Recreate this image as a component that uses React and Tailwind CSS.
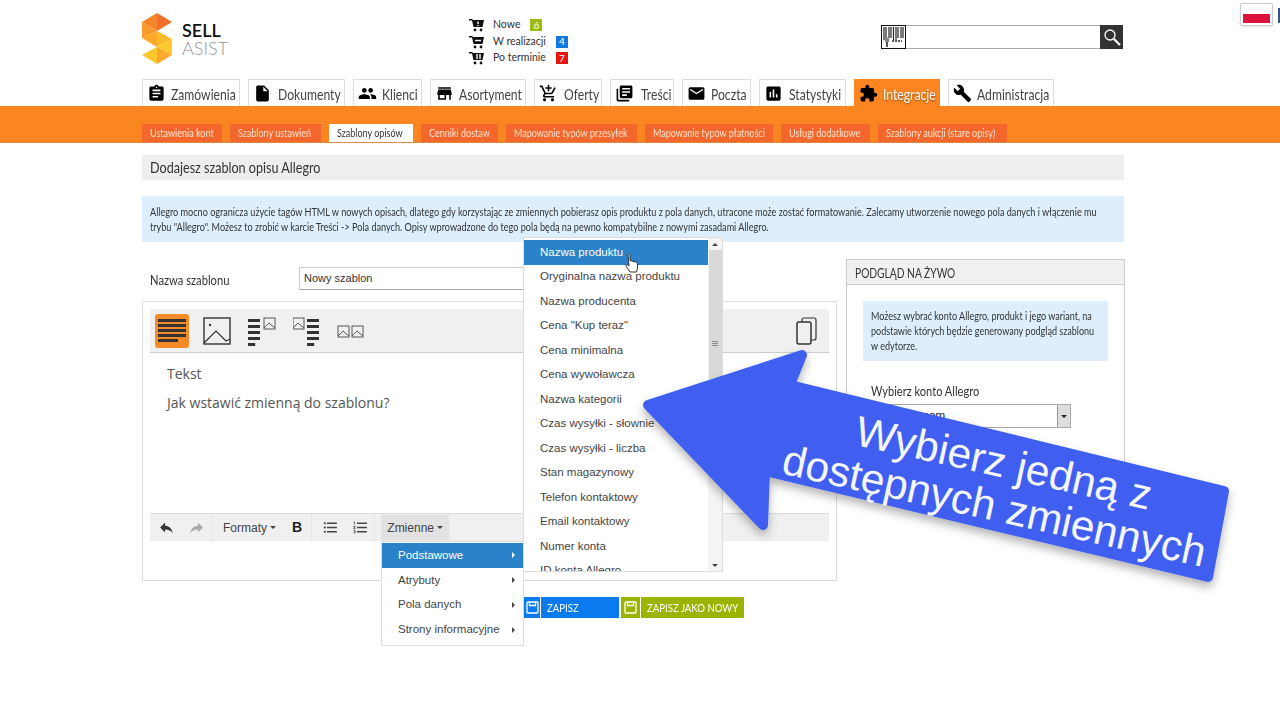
import {
  MdAssignment,
  MdInsertDriveFile,
  MdPeople,
  MdStore,
  MdAddShoppingCart,
  MdLibraryBooks,
  MdEmail,
  MdAssessment,
  MdExtension,
  MdBuild,
  MdReply,
  MdFormatListBulleted,
  MdFormatListNumbered,
} from 'react-icons/md'

const tabs = [
  { label: 'Zamówienia', icon: MdAssignment, w: 'w-[98px]', gap: 'gap-[5px]' },
  { label: 'Dokumenty', icon: MdInsertDriveFile, w: 'w-[97px]', gap: 'gap-[6px]' },
  { label: 'Klienci', icon: MdPeople, w: 'w-[69px]', gap: 'gap-[5px]' },
  { label: 'Asortyment', icon: MdStore, w: 'w-[96px]', gap: 'gap-[5px]' },
  { label: 'Oferty', icon: MdAddShoppingCart, w: 'w-[68px]', gap: 'gap-[6px]' },
  { label: 'Treści', icon: MdLibraryBooks, w: 'w-[64px]', gap: 'gap-[7px]' },
  { label: 'Poczta', icon: MdEmail, w: 'w-[69px]', gap: 'gap-[5px]' },
  { label: 'Statystyki', icon: MdAssessment, w: 'w-[87px]', gap: 'gap-[6px]' },
  { label: 'Integracje', icon: MdExtension, w: 'w-[86px]', gap: 'gap-[5px]', active: true },
  { label: 'Administracja', icon: MdBuild, w: 'w-[106px]', gap: 'gap-[5px]' },
]

const subTabs = [
  { label: 'Ustawienia kont', w: 'w-[80px]' },
  { label: 'Szablony ustawień', w: 'w-[91px]' },
  { label: 'Szablony opisów', w: 'w-[84px]', active: true },
  { label: 'Cenniki dostaw', w: 'w-[77px]' },
  { label: 'Mapowanie typów przesyłek', w: 'w-[131px]' },
  { label: 'Mapowanie typów płatności', w: 'w-[128px]' },
  { label: 'Usługi dodatkowe', w: 'w-[89px]' },
  { label: 'Szablony aukcji (stare opisy)', w: 'w-[129px]' },
]

const variables = [
  'Nazwa produktu',
  'Oryginalna nazwa produktu',
  'Nazwa producenta',
  'Cena "Kup teraz"',
  'Cena minimalna',
  'Cena wywoławcza',
  'Nazwa kategorii',
  'Czas wysyłki - słownie',
  'Czas wysyłki - liczba',
  'Stan magazynowy',
  'Telefon kontaktowy',
  'Email kontaktowy',
  'Numer konta',
  'ID konta Allegro',
]

const groups = ['Podstawowe', 'Atrybuty', 'Pola danych', 'Strony informacyjne']

// the page's narrow webfont isn't installed, so Lato gets squeezed sideways
function Narrow({ className = '', children }) {
  return <span className={`inline-block origin-left whitespace-nowrap ${className}`}>{children}</span>
}

function Logo() {
  return (
    <svg width="31" height="52" viewBox="0 0 31 52">
      <polygon points="15,0 30,9 15,18" fill="#f26f2b" />
      <polygon points="15,0 0,9 15,18" fill="#f6852a" />
      <polygon points="0,9 15,18 0,25" fill="#f89a2b" />
      <polygon points="15,18 0,25 15,34" fill="#faa92b" />
      <polygon points="15,18 30,26 15,34" fill="#fbb92c" />
      <polygon points="30,26 15,34 30,42" fill="#fdcb30" />
      <polygon points="15,34 0,42 15,51" fill="#fdc52e" />
      <polygon points="15,34 30,42 15,51" fill="#f9a92b" />
    </svg>
  )
}

function CartIcon({ mark }) {
  return (
    <svg width="16" height="14" viewBox="0 0 16 14">
      <path d="M0 1h3l1 1h11l-1.500 7H4.500L3 2.500H0z" fill="#111" />
      <circle cx="6" cy="12" r="1.400" fill="#111" />
      <circle cx="12" cy="12" r="1.400" fill="#111" />
      <path d={mark} stroke="#fff" strokeWidth="1.400" fill="none" />
    </svg>
  )
}

function LayoutIcon({ kind }) {
  const lines = (x, w) => (
    <g fill="#333">
      <rect x={x} y="4" width={w} height="3" />
      <rect x={x} y="10" width={w} height="3" />
      <rect x={x} y="16" width={w} height="3" />
      <rect x={x} y="22" width={w} height="3" />
      <rect x={x} y="28" width={w * 0.6} height="3" />
    </g>
  )
  const pic = (x, y, s) => (
    <g fill="none" stroke="#555" strokeWidth="1">
      <rect x={x} y={y} width={s} height={s} />
      <path d={`M${x} ${y + s - 1}l${s * 0.45} ${-s * 0.45}l${s * 0.55} ${s * 0.45}`} />
    </g>
  )
  if (kind === 'left') return <svg width="30" height="32" viewBox="0 0 30 32">{lines(0, 12)}{pic(16, 3, 11)}</svg>
  if (kind === 'right') return <svg width="30" height="32" viewBox="0 0 30 32">{pic(0, 3, 11)}{lines(14, 12)}</svg>
  return <svg width="28" height="32" viewBox="0 0 28 32">{pic(1, 11, 11)}{pic(15, 11, 11)}</svg>
}

function SaveIcon() {
  return (
    <svg width="13" height="13" viewBox="0 0 13 13" fill="none" stroke="#fff" strokeWidth="1.300">
      <rect x="1" y="1" width="11" height="11" rx="1" />
      <path d="M3.500 1v3.500h6V1" />
    </svg>
  )
}

function App() {
  return (
    <div className="relative w-[1280px] h-[720px] overflow-hidden bg-white font-['Lato',sans-serif] text-[#333]">
      {/* Header */}
      <header className="h-[79px] pl-[142px] pr-[156px] flex items-start">
        <div className="w-[327px] pt-[13px] flex items-start gap-[9px]">
          <Logo />
          <div className="pt-[8px] text-[18px] leading-[18px]">
            <div className="font-semibold text-[#111]">SELL</div>
            <div className="font-light text-[#999]">ASIST</div>
          </div>
        </div>
        <div className="w-[412px] pt-[17px] text-[10.5px]">
          {[
            { label: 'Nowe', n: 6, bg: 'bg-[#9cbb12]', mark: 'M9 3.500v2.500M9 7v1' },
            { label: 'W realizacji', n: 4, bg: 'bg-[#1178e0]', mark: 'M6 5.500h6' },
            { label: 'Po terminie', n: 7, bg: 'bg-[#e2170f]', mark: 'M8 3v5M11 3v5' },
          ].map(r => (
            <div key={r.label} className="h-[16.5px] flex items-center">
              <div className="w-[24px]"><CartIcon mark={r.mark} /></div>
              <span>{r.label}</span>
              <span className={`ml-[10px] w-[12px] h-[12px] flex items-center justify-center text-[10px] text-white ${r.bg}`}>{r.n}</span>
            </div>
          ))}
        </div>
        <div className="pt-[25px] flex">
          <svg width="25" height="24" viewBox="0 0 25 24">
            <rect x="0.500" y="0.500" width="24" height="23" fill="#fff" stroke="#111" />
            <path d="M3 2v13M5 2v13M8 2v11M10 2v11M12.500 2v13M15 2v13M17 2v11M20 2v11M22 2v11" stroke="#222" strokeWidth="1.200" />
            <circle cx="6" cy="15" r="2.500" fill="#888" />
            <path d="M6 17v5" stroke="#222" strokeWidth="1.500" />
            <path d="M11 16h10" stroke="#555" strokeWidth="2" strokeDasharray="2 1" />
          </svg>
          <div className="w-[194px] h-[24px] border-y border-[#aaa] bg-white" />
          <div className="w-[23px] h-[24px] bg-[#333] flex items-center justify-center">
            <svg width="20" height="20" viewBox="0 0 20 20" fill="none" stroke="#fff">
              <circle cx="8" cy="8" r="5" strokeWidth="1.300" />
              <path d="M12 12l6 6" strokeWidth="2.200" />
            </svg>
          </div>
        </div>
      </header>

      {/* Main tabs */}
      <nav className="h-[27px] pl-[142px] flex gap-2 text-[15px]">
        {tabs.map(({ label, icon: Icon, w, gap, active }) => (
          <div
            key={label}
            className={`${w} ${gap} pl-[4px] flex items-center overflow-hidden border border-b-0 ${active ? 'bg-[#fb8520] border-[#fb8520] text-white' : 'bg-white border-[#ddd] text-[#444]'}`}
          >
            <Icon size={19} className="shrink-0 text-black" />
            <Narrow className={`scale-x-[0.81] mt-[2px] ${active ? '[text-shadow:0_1px_2px_rgba(0,0,0,0.45)]' : ''}`}>{label}</Narrow>
          </div>
        ))}
      </nav>

      {/* Sub tabs */}
      <div className="h-[37px] bg-[#fb8520] pt-[18px] pl-[142px] flex gap-2 text-[11px] border-b border-[#d98a40]">
        {subTabs.map(t => (
          <div
            key={t.label}
            className={`${t.w} pl-2 flex items-center overflow-hidden ${t.active ? 'bg-white text-[#333]' : 'bg-[#f4672c] text-[#ffe3d0]'}`}
          >
            <Narrow className="scale-x-[0.82]">{t.label}</Narrow>
          </div>
        ))}
      </div>

      <main className="pl-[142px] pt-[12px] w-[1125px]">
        <div className="h-[25px] w-[982px] bg-[#eee] px-2 flex items-center text-[15px]">
          <Narrow className="scale-x-[0.84]">Dodajesz szablon opisu Allegro</Narrow>
        </div>
        <div className="mt-[16px] h-[46px] w-[982px] bg-[#ddeefc] px-2 pt-[8px] text-[11px] leading-[15px]">
          <Narrow className="scale-x-[0.827]">
            Allegro mocno ogranicza użycie tagów HTML w nowych opisach, dlatego gdy korzystając ze zmiennych pobierasz opis produktu z pola danych, utracone może zostać formatowanie. Zalecamy utworzenie nowego pola danych i włączenie mu
            <br />
            trybu "Allegro". Możesz to zrobić w karcie Treści -&gt; Pola danych. Opisy wprowadzone do tego pola będą na pewno kompatybilne z nowymi zasadami Allegro.
          </Narrow>
        </div>

        <div className="mt-[17px] flex gap-[9px]">
          {/* Editor column */}
          <div className="w-[695px]">
            <div className="pt-[8px] h-[42px] flex items-start">
              <label className="w-[157px] pl-2 pt-[2px] text-[14px]">
                <Narrow className="scale-x-[0.8]">Nazwa szablonu</Narrow>
              </label>
              <div className="w-[300px] h-[23px] border border-[#ccc] border-b-[#aaa] px-1 flex items-center font-['Liberation_Sans',sans-serif] text-[11px]">
                Nowy szablon
              </div>
            </div>
            <div className="h-[280px] border border-[#ddd] px-[7px] pt-[7px]">
              <div className="h-[44px] bg-[#f0f0f0] border-b border-[#ccc] flex items-center pl-[5px] relative">
                <div className="w-[34px] h-[34px] bg-[#f68a26] rounded-[3px] flex flex-col items-center justify-center gap-[2px]">
                  {[28, 28, 28, 28, 20].map((w, i) => (
                    <span key={i} className={`h-[3px] bg-[#333] self-start ml-[3px] ${w === 28 ? 'w-[28px]' : 'w-[20px]'}`} />
                  ))}
                </div>
                <svg width="28" height="28" viewBox="0 0 28 28" className="ml-[14px]">
                  <rect x="1" y="1" width="26" height="26" fill="none" stroke="#333" strokeWidth="1.400" />
                  <circle cx="7" cy="8" r="1.200" fill="#333" />
                  <path d="M1 26l12-12 10 10 4-2" fill="none" stroke="#333" strokeWidth="1.200" />
                </svg>
                <div className="ml-[17px]"><LayoutIcon kind="left" /></div>
                <div className="ml-[15px]"><LayoutIcon kind="right" /></div>
                <div className="ml-[14px]"><LayoutIcon kind="two" /></div>
                <svg width="24" height="28" viewBox="0 0 24 28" className="absolute left-[645px] top-[8px]">
                  <rect x="7" y="1" width="14" height="22" rx="2" fill="#f0f0f0" stroke="#333" strokeWidth="1.200" />
                  <rect x="2" y="5" width="14" height="22" rx="2" fill="#f0f0f0" stroke="#333" strokeWidth="1.500" />
                </svg>
              </div>
              <div className="h-[160px] pl-[17px] pt-[11px] font-['Open_Sans',sans-serif] text-[14px] text-[#555]">
                <p className="leading-[20px]">Tekst</p>
                <p className="mt-[9px] leading-[20px]">Jak wstawić zmienną do szablonu?</p>
              </div>
              <div className="h-[28px] bg-[#f0f0f0] border-t border-[#ddd] flex items-center font-['Liberation_Sans',sans-serif] text-[12px] text-[#444]">
                <MdReply size={17} className="ml-[8px] text-[#333]" />
                <MdReply size={17} className="ml-[13px] text-[#aaa] -scale-x-100" />
                <span className="ml-[6px] -mr-px w-px h-[27px] bg-[#e4e4e4]" />
                <span className="ml-[12px]">Formaty</span>
                <span className="ml-[3px] border-x-[3px] border-x-transparent border-t-[3px] border-t-[#444]" />
                <span className="ml-[16px] font-bold text-[14px] text-[#222]">B</span>
                <span className="ml-[9px] -mr-px w-px h-[27px] bg-[#e4e4e4]" />
                <MdFormatListBulleted size={17} className="ml-[11px]" />
                <MdFormatListNumbered size={17} className="ml-[13px]" />
                <span className="ml-[5px] -mr-px w-px h-[27px] bg-[#e4e4e4]" />
                <div className="ml-[7px] h-[25px] w-[68px] bg-[#e2e2e2] flex items-center justify-center gap-[3px]">
                  Zmienne
                  <span className="border-x-[3px] border-x-transparent border-t-[3px] border-t-[#444]" />
                </div>
              </div>
            </div>
            <div className="mt-[16px] pl-[382px] flex gap-[2px] text-[12px] text-white h-[21px]">
              <div className="w-[95px] bg-[#0a7bee] flex items-center">
                <span className="shrink-0 w-[17px] h-[21px] flex items-center justify-center border-r border-white"><SaveIcon /></span>
                <Narrow className="ml-[6px] scale-x-[0.8]">ZAPISZ</Narrow>
              </div>
              <div className="w-[123px] bg-[#9cb400] flex items-center overflow-hidden">
                <span className="shrink-0 w-[20px] h-[21px] flex items-center justify-center border-r border-white"><SaveIcon /></span>
                <Narrow className="ml-[6px] scale-x-[0.8]">ZAPISZ JAKO NOWY</Narrow>
              </div>
            </div>
          </div>

          {/* Live preview */}
          <aside className="w-[279px] h-[222px] border border-[#ccc]">
            <div className="h-[25px] bg-[#f0f0f0] border-b border-[#ccc] px-2 flex items-center text-[14px]">
              <Narrow className="scale-x-[0.73]">PODGLĄD NA ŻYWO</Narrow>
            </div>
            <div className="px-4 pt-[16px]">
              <div className="h-[60px] bg-[#ddeefc] px-2 pt-[8px] text-[10.5px] leading-[15px]">
                <Narrow className="scale-x-[0.86]">
                  Możesz wybrać konto Allegro, produkt i jego wariant, na
                  <br />
                  podstawie których będzie generowany podgląd szablonu
                  <br />
                  w edytorze.
                </Narrow>
              </div>
              <div className="mt-[19px] pl-2 text-[14px]">
                <Narrow className="scale-x-[0.79]">Wybierz konto Allegro</Narrow>
              </div>
              <div className="mt-[3px] ml-2 w-[200px] h-[24px] border border-[#aaa] flex items-center justify-between pl-[10px] font-['Liberation_Sans',sans-serif] text-[12px]">
                Allegro.com
                <span className="w-[13px] h-[22px] bg-[#ddd] border-l border-[#999] flex items-center justify-center">
                  <span className="border-x-[3px] border-x-transparent border-t-[3px] border-t-[#222]" />
                </span>
              </div>
            </div>
          </aside>
        </div>
      </main>

      {/* Variable group menu */}
      <div className="absolute left-[381px] top-[541px] w-[143px] h-[105px] bg-white border border-[#ddd] pt-[1px] font-['Liberation_Sans',sans-serif] text-[11.5px] text-[#444]">
        {groups.map((g, i) => (
          <div key={g} className={`h-[24.75px] pl-4 pr-2 flex items-center justify-between ${i === 0 ? 'bg-[#2a83c8] text-white' : ''}`}>
            {g}
            <span className="border-y-[3px] border-y-transparent border-l-[3px] border-l-current" />
          </div>
        ))}
      </div>

      {/* Variable list */}
      <div className="absolute left-[523px] top-[237px] w-[200px] h-[335px] bg-white border border-[#ddd] overflow-hidden flex font-['Liberation_Sans',sans-serif] text-[11.5px] text-[#444]">
        <div className="w-[185px] pt-[2px]">
          {variables.map((v, i) => (
            <div key={v} className={`h-[24.5px] pl-4 flex items-center ${i === 0 ? 'bg-[#2a83c8] text-white' : ''}`}>{v}</div>
          ))}
        </div>
        <div className="w-[14px] bg-[#f4f4f4] flex flex-col items-center pt-[5px] pb-[4px]">
          <span className="border-x-[3px] border-x-transparent border-b-[3px] border-b-[#444]" />
          <div className="mt-[4px] w-[13px] h-[187px] bg-[#d9d9d9] flex flex-col items-center justify-center gap-px">
            <span className="w-[6px] h-px bg-[#888]" />
            <span className="w-[6px] h-px bg-[#888]" />
            <span className="w-[6px] h-px bg-[#888]" />
          </div>
          <span className="mt-auto border-x-[3px] border-x-transparent border-t-[3px] border-t-[#444]" />
        </div>
      </div>

      {/* Cursor */}
      <svg width="14" height="20" viewBox="0 0 14 20" className="absolute left-[625px] top-[253px]">
        <path d="M3 1.500c0-1 2-1 2 0v6l6 1.500c1.500.5 1.500 1.500 1.500 3v3l-1 4H5l-4-6c-.5-1 1-2 2-1l1 1z" fill="#fff" stroke="#222" strokeWidth="0.900" />
      </svg>

      {/* Flags */}
      <div className="absolute left-[1240px] top-[3px] w-[33px] h-[23px] bg-white border border-[#ccc] rounded-[2px] p-[2px] shadow-sm flex flex-col justify-end">
        <div className="h-[9px] bg-[#dc143c]" />
      </div>
      <div className="absolute left-[1278px] top-[8px] w-[2px] h-[15px] bg-[#3b4f8c]" />

      {/* Big arrow callout */}
      <svg width="1280" height="720" viewBox="0 0 1280 720" className="absolute inset-0 pointer-events-none">
        <defs>
          <filter id="arrowShadow" x="-10%" y="-10%" width="120%" height="120%">
            <feDropShadow dx="0" dy="5" stdDeviation="5" floodColor="#000" floodOpacity="0.3" />
          </filter>
        </defs>
        <polygon
          points="648,405 802,355 790,385 1224,491 1208,577 765,471 763,525"
          fill="#3f5ef0"
          stroke="#3f5ef0"
          strokeWidth="10"
          strokeLinejoin="round"
          filter="url(#arrowShadow)"
        />
      </svg>
      <div className="absolute left-[759px] top-[441px] w-[480px] rotate-[12.5deg] text-center font-['Liberation_Sans',sans-serif] text-[42.5px] leading-[44px] text-[#f4f6ff]">
        Wybierz jedną z
        <br />
        dostępnych zmiennych
      </div>
    </div>
  )
}

export default App
